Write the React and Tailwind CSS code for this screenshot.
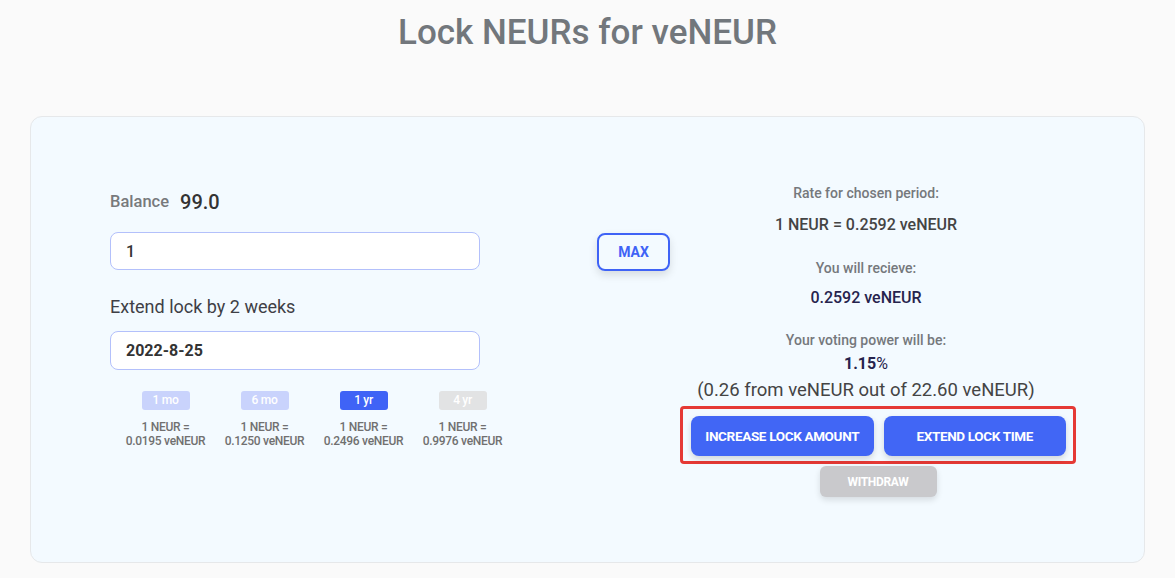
import React, { useState } from 'react';

const periods = [
  { label: '1 mo', rate: '0.0195', style: 'bg-[#c9d3fc] text-white' },
  { label: '6 mo', rate: '0.1250', style: 'bg-[#c9d3fc] text-white' },
  { label: '1 yr', rate: '0.2496', style: 'bg-[#3f63f6] text-white' },
  { label: '4 yr', rate: '0.9976', style: 'bg-[#e2e3e4] text-white' },
];

const App = () => {
  const [amount, setAmount] = useState('1');
  const [date, setDate] = useState('2022-8-25');

  return (
    <div className="min-h-[578px] bg-[#fafafa] font-['Roboto',sans-serif] pt-[12px] pb-[15px]">
      {/* Title */}
      <h1 className="text-center text-[35px] leading-[42px] font-medium text-[#72777c]">
        Lock NEURs for veNEUR
      </h1>

      {/* Card */}
      <div className="mx-[30px] mt-[62px] h-[447px] rounded-xl border border-[#e6e8ea] bg-[#f3faff] flex">
        {/* Left column */}
        <div className="ml-[79px] w-[370px] shrink-0 pt-[71px]">
          <div className="flex items-center h-[28px]">
            <span className="text-[16.5px] font-medium text-[#77797c]">Balance</span>
            <span className="ml-[11px] text-[20px] font-medium text-[#333]">99.0</span>
          </div>
          <input
            value={amount}
            onChange={(e) => setAmount(e.target.value)}
            className="mt-[16px] w-full h-[38px] rounded-lg border border-[#b3c0fb] bg-white px-[15px] text-[16px] font-medium text-[#333] outline-none"
          />
          <div className="mt-[23px] h-[28px] leading-[28px] text-[18px] text-[#3f3f46]">
            Extend lock by 2 weeks
          </div>
          <input
            value={date}
            onChange={(e) => setDate(e.target.value)}
            className="mt-[10px] w-full h-[39px] rounded-lg border border-[#b3c0fb] bg-white px-[15px] text-[16px] font-bold text-[#333] outline-none"
          />
          {/* Period pills */}
          <div className="mt-[21px] ml-[6px] flex">
            {periods.map((p) => (
              <div key={p.label} className="w-[99px] shrink-0 flex flex-col items-center">
                <button className={`w-[48px] h-[19px] rounded-[3px] text-[12px] leading-[19px] font-medium tracking-tight ${p.style}`}>
                  {p.label}
                </button>
                <div className="mt-[10px] text-center text-[12px] leading-[14px] font-medium text-[#707070] tracking-tight whitespace-nowrap">
                  <div>1 NEUR =</div>
                  <div>{p.rate} veNEUR</div>
                </div>
              </div>
            ))}
          </div>
        </div>

        {/* MAX */}
        <div className="ml-[117px] pt-[116px]">
          <button className="w-[73px] h-[38px] rounded-lg border-2 border-[#3f63f6] text-[14px] font-bold text-[#3f63f6] shadow-[0_4px_8px_rgba(0,0,0,0.12)]">
            MAX
          </button>
        </div>

        {/* Right column */}
        <div className="ml-[10px] pt-[66px] flex flex-col items-start">
          <div className="w-[372px] text-center">
            <div className="text-[14px] leading-[20px] font-medium text-[#75787c]">Rate for chosen period:</div>
            <div className="mt-[10px] text-[16px] leading-[24px] font-medium text-[#444]">1 NEUR = 0.2592 veNEUR</div>
            <div className="mt-[21px] text-[14px] leading-[20px] font-medium text-[#75787c]">You will recieve:</div>
            <div className="mt-[8px] text-[16px] leading-[24px] font-medium text-[#26234d]">0.2592 veNEUR</div>
            <div className="mt-[20px] text-[14px] leading-[20px] font-medium text-[#75787c]">Your voting power will be:</div>
            <div className="mt-[2px] text-[16px] leading-[24px] text-[#26234d]">
              <span className="font-bold">1.15</span>
              <span>%</span>
            </div>
            <div className="whitespace-nowrap text-[18.5px] leading-[28px] text-[#444]">
              (0.26 from veNEUR out of 22.60 veNEUR)
            </div>
          </div>

          <div className="mt-[2px] w-[396px] flex flex-col items-center">
            <div className="w-full rounded-[4px] border-[3px] border-[#e53935] pl-[8px] pr-[7px] pt-[7px] pb-[5px] flex gap-[10px]">
              <button className="flex-1 h-[40px] rounded-lg bg-[#4166f5] text-white text-[13.5px] font-bold tracking-tight shadow-[0_3px_6px_rgba(0,0,0,0.15)]">
                INCREASE LOCK AMOUNT
              </button>
              <button className="flex-1 h-[40px] rounded-lg bg-[#4166f5] text-white text-[13.5px] font-bold tracking-tight shadow-[0_3px_6px_rgba(0,0,0,0.15)]">
                EXTEND LOCK TIME
              </button>
            </div>
            <button className="mt-[2px] w-[117px] h-[31px] rounded-md bg-[#c9c9cc] text-white text-[12px] font-bold tracking-tight shadow-[0_3px_6px_rgba(0,0,0,0.12)]">
              WITHDRAW
            </button>
          </div>
        </div>
      </div>
    </div>
  );
};

export default App;
